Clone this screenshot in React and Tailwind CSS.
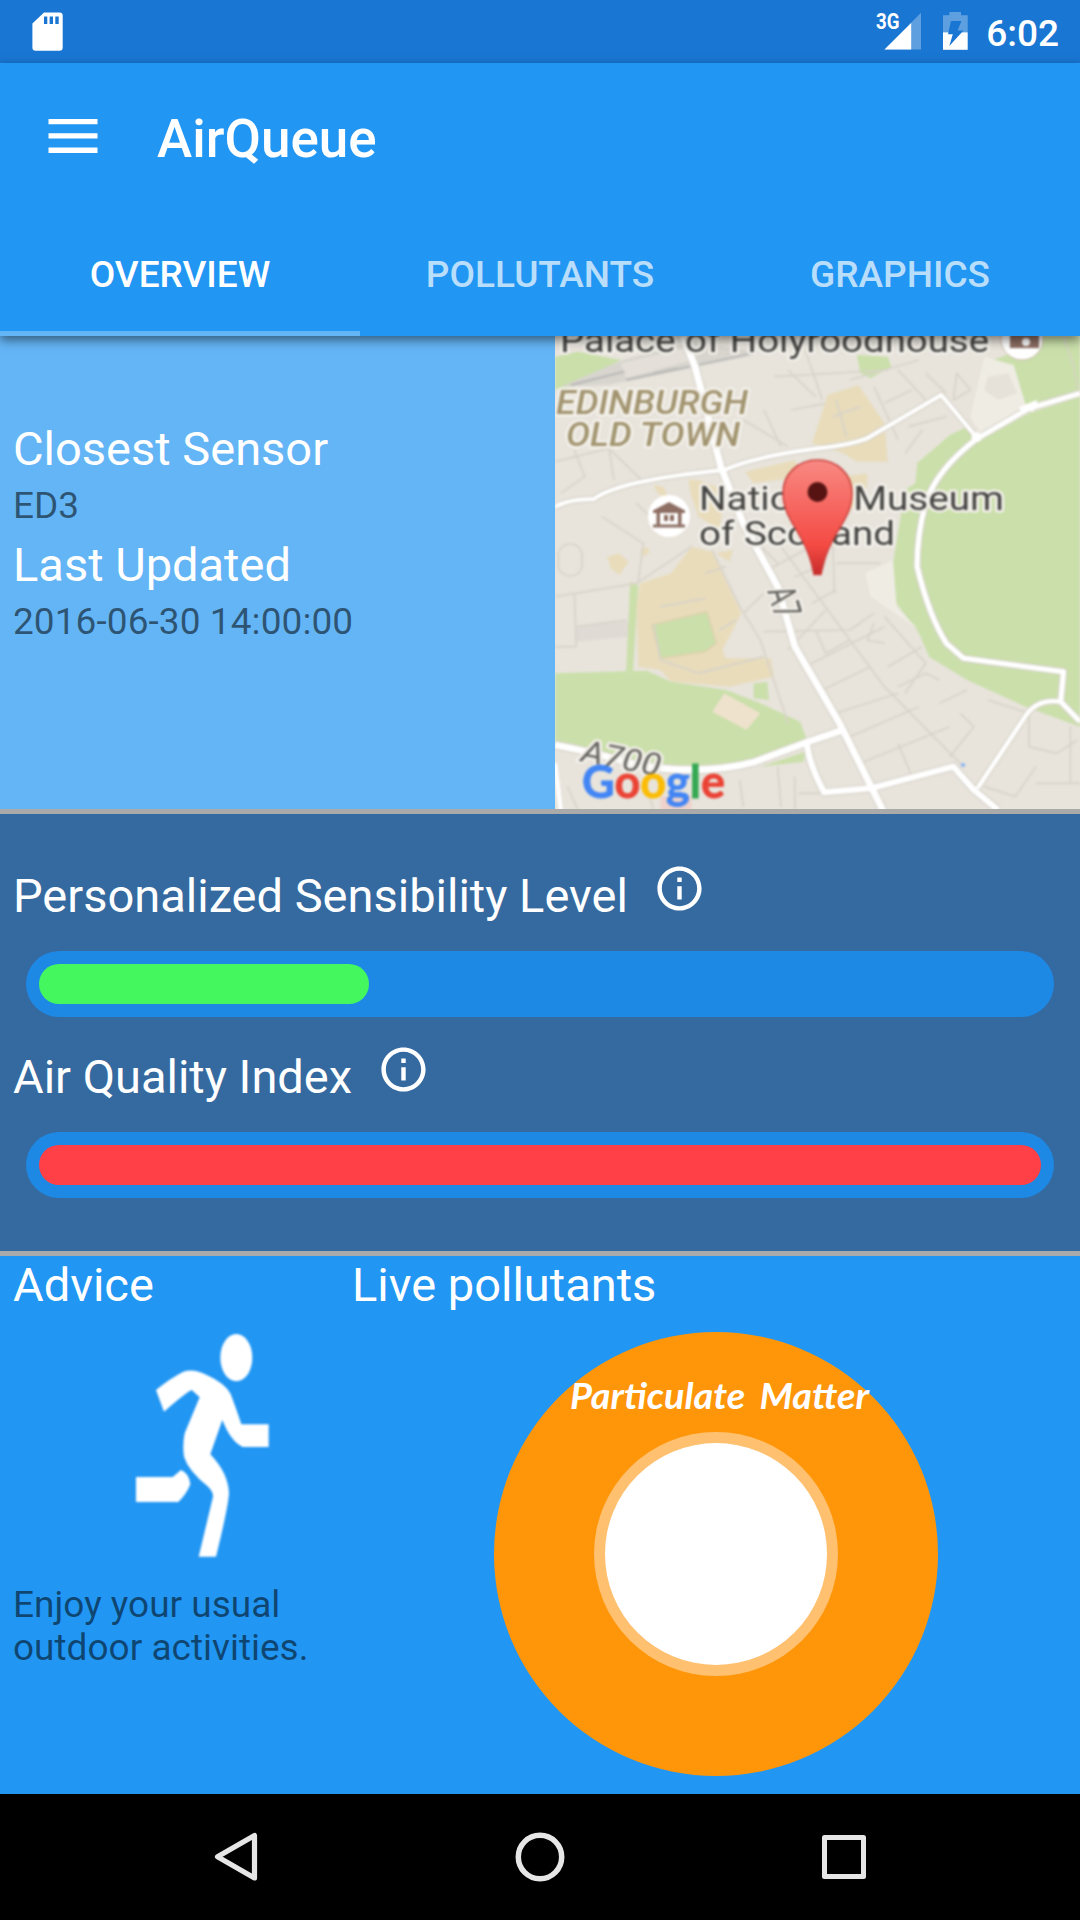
import React from "react";
import { MdInfoOutline } from "react-icons/md";

function StatusBar() {
  return (
    <div className="flex h-[63px] items-start justify-between bg-[#1976d2] pl-8 pr-[21px] text-white">
      <svg className="mt-3 h-[39px] w-[31px]" viewBox="0 0 31 39">
        <path
          fillRule="evenodd"
          fill="#fff"
          d="M12 0.5H27.5Q30.7 0.5 30.7 3.5V35.5Q30.7 38.7 27.5 38.7H3.5Q.4 38.7 .4 35.5V11.5ZM12 4.5V12H15.3V4.5ZM17.6 4.5V12H21V4.5ZM23.3 4.5V12H26.7V4.5Z"
        />
      </svg>
      <div className="flex items-start">
        <svg className="mt-2 h-[44px] w-[48px]" viewBox="0 0 48 44">
          <path d="M47 4.7V41.5H10.500Z" fill="#fff" opacity=".3" />
          <path d="M37.2 15V41.5H10.500Z" fill="#fff" />
          <text x="2" y="21" fontFamily="Roboto" fontWeight="700" fontSize="22" textLength="23.5" lengthAdjust="spacingAndGlyphs" fill="#fff">
            3G
          </text>
        </svg>
        <svg className="ml-[21px] mt-3 h-[38px] w-[25px]" viewBox="0 0 25 38">
          <path d="M0 3.2H6.3V0H18V3.2H24.7V20.3H0Z" fill="#fff" opacity=".3" />
          <path d="M0 20.3H24.7V37.8H0Z" fill="#fff" />
          <path d="M8 9H18.5L14.5 18.5H20.5L6.3 34L9.8 22.2H5Z" fill="#1976d2" />
        </svg>
        <span className="ml-[18px] mt-[7px] text-[37px] font-medium leading-[53px]">6:02</span>
      </div>
    </div>
  );
}

function AppBar() {
  return (
    <header className="relative z-10 h-[273px] bg-[#2196f3] text-white shadow-[0_4px_10px_rgba(0,0,0,0.5)]">
      <div className="flex h-[147px] items-center pl-12">
        <svg className="-mt-[2px] h-[36px] w-[50px]" viewBox="0 0 50 36">
          <path d="M.5 .9h49v5.400h-49zM.5 15.200h49v5.400h-49zM.5 29.500h49v5.400h-49z" fill="#fff" />
        </svg>
        <h1 className="ml-[59px] mt-[5px] text-[53px] font-medium leading-[62px]">AirQueue</h1>
      </div>
      <nav className="grid h-[126px] grid-cols-3 grid-rows-[126px] text-center text-[37px] font-medium leading-[129px]">
        <div className="h-[126px] border-b-[5px] border-[#64b5f6]">OVERVIEW</div>
        <div className="text-white/70">POLLUTANTS</div>
        <div className="text-white/70">GRAPHICS</div>
      </nav>
    </header>
  );
}

const minorStreets = [
  "M44 395L200 355L300 455M100 360L130 440L60 490M200 355L215 450",
  "M280 520L370 610M180 560L300 640L285 760M44 800L280 760L440 650M100 790L105 950L44 950M105 890L250 870",
  "M55 690A35 35 0 1 0 120 690A35 35 0 1 0 55 690",
  "M500 660L580 830L640 930L720 1180M590 850L650 790M650 905L900 900L970 850",
  "M660 720L770 660M700 650L1000 1070L1220 1300M740 740L830 700M790 820L860 780M830 840L720 960M850 640L855 790",
  "M860 700L990 700M800 900L830 970L900 930M770 1010L1000 890M820 1080L960 1010M860 1150L1040 1090M900 1220L1100 1130",
  "M930 1300L1190 1190M920 1290L960 1370M1040 1240L1080 1340M1000 860L1120 1000L1060 1090M970 880L950 930L1000 940",
  "M1010 1010L1110 950M1040 1070L1120 1030L1160 1050M1160 1120L1240 1080M1220 1150L1260 1190L1190 1280",
  "M1300 1110L1420 1150L1420 1250L1500 1270L1560 1230M1290 1370L1380 1400L1440 1310M1440 1360H1568M1540 1190V1360",
  "M580 1350L590 1430M690 1310L700 1430M750 1390L830 1390M740 1340V1440M310 1370L330 1440M80 1370L110 1440",
  "M720 120L800 200M650 240L700 350M590 270L640 300L720 350M680 140L1010 120M770 60L820 210M730 240L830 220",
  "M900 150L1100 90M970 170L1040 330M1040 120L1120 210M1070 290L1180 260M1060 370L1110 300M1120 130L1180 190",
  "M1210 130L1250 180L1200 210ZM1000 220L1080 180M940 330L1000 290M860 210L890 320M850 260L930 230",
  "M350 830L480 805M330 880L350 990L460 1030L650 980M480 730L540 710M520 900L570 870M560 560L690 700",
];

const majorRoads = [
  ["M415 18L450 110L480 230L525 410L590 580L690 770L740 950L870 1180L1000 1450", 20],
  ["M44 530Q90 505 155 508Q230 450 535 420Q620 380 810 355Q900 345 950 325L1165 195L1270 325", 12],
  ["M1568 190L1420 235L1270 325Q1150 420 1120 520Q1095 610 1095 710Q1130 860 1180 940L1230 985L1520 1025L1512 1115L1568 1175", 15],
  ["M1512 1115Q1450 1105 1415 1150L1270 1375", 13],
  ["M44 1245Q170 1270 270 1302Q460 1340 620 1297L780 1235L880 1200", 20],
  ["M775 1240Q780 1300 825 1387L960 1375L1200 1310L1260 1380L1330 1440", 18],
];

function MapLabel({ x, y, width, size, fill = "#454442", children, ...rest }) {
  return (
    <text
      x={x}
      y={y}
      textLength={width}
      lengthAdjust="spacingAndGlyphs"
      fontFamily="Roboto"
      fontSize={size}
      fill={fill}
      stroke="#f3f0ea"
      strokeWidth="5"
      strokeLinejoin="round"
      paintOrder="stroke"
      {...rest}
    >
      {children}
    </text>
  );
}

function SensorMap() {
  return (
    <svg className="h-[473px] w-[525px] shrink-0 bg-[#e8e4dc]" viewBox="0 0 525 473">
      <defs>
        <linearGradient id="pin" x1="0" y1="0" x2="0" y2="1">
          <stop offset="0" stopColor="#f98983" />
          <stop offset=".75" stopColor="#f44a43" />
          <stop offset="1" stopColor="#c62b2b" />
        </linearGradient>
      </defs>
      <g className="blur-[0.8px]">
        <g transform="matrix(0.3444 0 0 0.33333 -15 -6)" strokeLinejoin="round">
          {/* parks */}
          <g fill="#cadfaa">
            <path d="M44 80L110 65L235 90L90 170L44 178Z" />
            <path d="M920 75L1010 80L1020 110L960 145L930 130Z" />
            <path d="M1315 90L1370 70L1440 18H1568V185L1410 225L1375 105L1330 105Z" />
            <path d="M1568 200L1420 250L1280 330L1240 290L1190 315L1095 400L1090 460L1060 480L1025 700L1035 820L1100 910L1130 980L1240 1050L1410 1130L1568 1190Z" />
            <path d="M262 755L285 765L270 1025H250Z" />
            <path d="M44 1030L310 1022L380 1055L540 1080L640 1120L755 1175L775 1230L620 1290Q420 1320 270 1290L44 1240Z" />
            <path d="M620 1060L660 1055L665 1110L620 1105Z" />
            <path d="M640 1310L770 1265L765 1295Z" />
          </g>
          <path d="M1290 80L1375 105L1410 225L1280 310L1250 260Z M945 730L1025 690L1035 830L1100 900L1030 850L960 800Z" fill="#efece4" />
          <path d="M1300 140L1360 130L1385 190L1330 210L1290 180Z" fill="#e6e2da" />
          {/* rail yard */}
          <path d="M60 170L240 90L440 35L640 65L400 120L200 165Z" fill="#d8d5cf" />
          <path d="M235 100L420 55L440 90L250 145Z" fill="#e4e0d9" />
          <path d="M90 165L245 125M250 150L620 70M330 130L400 115" stroke="#bdbcb9" strokeWidth="7" fill="none" />
          <path d="M105 890L255 870V920L105 935Z" fill="#dfdad3" />
          {/* campus blocks */}
          <g fill="#e8dcbb">
            <path d="M835 195L925 165L1000 280L1010 395H920L880 370L790 340Z" />
            <path d="M595 425L740 390L760 440L620 460Z M330 465L360 470L370 500L345 495Z M430 450L460 450L540 480L520 600L460 560L440 500Z M870 440L950 430V470L890 560Z" />
            <path d="M440 650L500 665L585 850L530 960L540 985L670 985L680 1040L550 1070L380 1055L350 1020L285 1010L280 830L290 760L380 730Z" />
            <path d="M195 680L230 670L258 695L230 735L205 715Z M290 660L310 650L320 665L300 680Z M510 670L560 660L550 695Z" />
          </g>
          <path d="M325 885L485 845L512 940L480 965L350 985Z" fill="#cadfaa" stroke="#ded3ae" strokeWidth="5" />
          <path d="M535 1090L640 1150L600 1200L500 1145Z" fill="#eee2cc" />
          <path d="M350 1400L440 1395L440 1440H350Z" fill="#eed2cb" />
          <g fill="none" stroke="#d8d3c9" strokeWidth="5">
            {minorStreets.map((d) => (
              <path key={d} d={d} />
            ))}
            <path d="M1520 18L1550 110L1562 180" strokeWidth="4" />
          </g>
          <g fill="none" stroke="#d6d2c8">
            {majorRoads.map(([d, w]) => (
              <path key={d} d={d} strokeWidth={w + 7} />
            ))}
          </g>
          <g fill="none" stroke="#fff">
            {majorRoads.map(([d, w]) => (
              <path key={d} d={d} strokeWidth={w} />
            ))}
            <path d="M44 1300L60 1440" strokeWidth="12" />
          </g>
          <circle cx="1268" cy="322" r="15" fill="#fff" />
          <path d="M1395 235L1440 215L1430 240Z" fill="#fff" stroke="#fff" strokeWidth="8" />
          <rect x="1222" y="1300" width="12" height="10" fill="#8ab4f0" />
        </g>

        <MapLabel x="5" y="16" width="429" size="34">Palace of Holyroodhouse</MapLabel>
        <circle cx="467" cy="3" r="21" fill="#fff" stroke="#cbb9aa" />
        <path d="M455 -4H484V12H455Z" fill="#8d6e63" />
        <circle cx="471" cy="6" r="4" fill="#fff" />

        <MapLabel x="1" y="78" width="192" size="33.5" fill="#a2946f" fontStyle="italic" fontWeight="500">EDINBURGH</MapLabel>
        <MapLabel x="11" y="110" width="174" size="33.5" fill="#a2946f" fontStyle="italic" fontWeight="500">OLD TOWN</MapLabel>

        <circle cx="114" cy="180" r="21" fill="#fff" />
        <g fill="#8d6e63">
          <path d="M114 166L130 174.500V177H98V174.500Z" />
          <path d="M98 188.500H130V191.500H98Z M101.500 177H105V189H101.500Z M123 177H126.500V189H123Z" />
          <path d="M109 179H113V185H109Z M115 179H119V185H115Z" />
        </g>
        <MapLabel x="144" y="174" width="305" size="34">National Museum</MapLabel>
        <MapLabel x="144" y="209" width="196" size="34">of Scotland</MapLabel>

        <MapLabel x="0" y="0" width="31" size="39" fill="#66645f" transform="translate(212 255) rotate(73)">A7</MapLabel>
        <MapLabel x="0" y="0" width="80" size="31" fill="#66645f" transform="translate(25 425) rotate(11)" fontStyle="italic">A700</MapLabel>

        <path
          d="M262.500 124C243 124 228 138 228 157C228 177 239 188 248 206C256 221 257 230 259 238.500H266C268 230 269 221 277 206C286 188 297 177 297 157C297 138 282 124 262.500 124Z"
          fill="url(#pin)"
          stroke="#c9403c"
          strokeWidth="1.5"
        />
        <circle cx="262.500" cy="156" r="10" fill="#561312" />

        <text
          x="27"
          y="462"
          fontFamily="Lato"
          fontWeight="700"
          fontSize="46"
          textLength="143"
          lengthAdjust="spacingAndGlyphs"
          strokeWidth="0.8"
        >
          <tspan fill="#4285f4" stroke="#4285f4">G</tspan>
          <tspan fill="#ea4335" stroke="#ea4335">o</tspan>
          <tspan fill="#fbbc05" stroke="#fbbc05">o</tspan>
          <tspan fill="#4285f4" stroke="#4285f4">g</tspan>
          <tspan fill="#34a853" stroke="#34a853">l</tspan>
          <tspan fill="#ea4335" stroke="#ea4335">e</tspan>
        </text>
      </g>
    </svg>
  );
}

function SensorRow() {
  return (
    <section className="flex h-[478px] border-b-[5px] border-[#aaaaaa] bg-[#64b5f6]">
      <div className="w-[555px] shrink-0 pl-[13px] pt-[81px] text-[37px] leading-[54px] text-black/54">
        <h2 className="text-[47px] leading-[63px] text-white">Closest Sensor</h2>
        <p className="-mt-px">ED3</p>
        <h2 className="text-[47px] leading-[63px] text-white">Last Updated</h2>
        <p className="-mt-px tracking-[0.08px]">2016-06-30 14:00:00</p>
      </div>
      <SensorMap />
    </section>
  );
}

function Meter({ label, percent, barClass }) {
  return (
    <div className="h-[181px]">
      <div className="flex h-[86px] pl-[13px]">
        <h2 className="text-[47px] leading-[62px] text-white">{label}</h2>
        <MdInfoOutline className="-mt-[3px] ml-[25px] size-[53px] text-white blur-[0.5px]" />
      </div>
      <div className="mx-[26px] h-[66px] rounded-full bg-[#1e88e5] p-[13px]">
        <div className={barClass} style={{ width: `${percent}%` }} />
      </div>
    </div>
  );
}

function Levels() {
  return (
    <section className="h-[442px] border-b-[5px] border-[#aaaaaa] bg-[#356aa0] pt-[51px]">
      <Meter label="Personalized Sensibility Level" percent={32.95} barClass="h-10 rounded-full bg-[#44f75e]" />
      <Meter label="Air Quality Index" percent={100} barClass="h-10 rounded-full bg-[#ff4147]" />
    </section>
  );
}

function Runner() {
  return (
    <svg className="ml-[120px] h-[270px] w-[200px] blur-[1.3px]" viewBox="0 0 600 810" fill="#fff">
      <ellipse cx="349" cy="143" rx="48" ry="71" />
      <path d="M108 240Q150 205 190 185Q222 174 262 196Q315 220 332 252Q352 305 364 343H446V411H368Q332 394 307 330L271 433Q325 490 327 550Q325 590 288 740H236L279 560Q280 545 262 528Q205 482 192 440Q187 405 194 370L239 262L215 240Q195 250 132 305Z" />
      <path d="M48 501H158L183 480Q208 490 211 523Q200 552 175 576H48Z" />
    </svg>
  );
}

function Bottom() {
  return (
    <section className="flex h-[538px] bg-[#2196f3]">
      <div className="w-[352px] shrink-0">
        <h2 className="h-[54px] pl-[13px] text-[47px] leading-[57px] text-white">Advice</h2>
        <Runner />
        <p className="pl-[13px] pt-[3px] text-[37px] leading-[43px] text-black/54">
          Enjoy your usual
          <br />
          outdoor activities.
        </p>
      </div>
      <div className="grow">
        <h2 className="h-[76px] text-[47px] leading-[57px] text-white">Live pollutants</h2>
        <svg className="ml-[142px] h-[444px] w-[444px]" viewBox="0 0 444 444">
          <circle cx="222" cy="222" r="222" fill="#ff960a" />
          <circle cx="222" cy="222" r="122" fill="#ffc070" />
          <circle cx="222" cy="222" r="111" fill="#fff" />
          <text
            x="76"
            y="77"
            fill="#fff"
            fontFamily="'Ink Free', 'Segoe Print', Lato, cursive"
            fontStyle="italic"
            fontWeight="700"
            fontSize="37"
            wordSpacing="6"
            textLength="299"
            lengthAdjust="spacingAndGlyphs"
          >
            Particulate Matter
          </text>
        </svg>
      </div>
    </section>
  );
}

function NavBar() {
  return (
    <footer className="flex h-[126px] items-center justify-between bg-black pl-[211px] pr-[211px]">
      <svg className="size-[52px]" viewBox="0 0 52 52" fill="none" stroke="#e6e6e6" strokeWidth="5.2" strokeLinejoin="round">
        <path d="M43.500 4.500V47L6.500 25.800Z" />
      </svg>
      <svg className="size-[52px]" viewBox="0 0 52 52" fill="none" stroke="#e6e6e6" strokeWidth="5.500">
        <circle cx="26" cy="26" r="21.700" />
      </svg>
      <svg className="size-[52px]" viewBox="0 0 52 52" fill="none" stroke="#e6e6e6" strokeWidth="5" strokeLinejoin="round">
        <path d="M7.500 6.500H46.500V45.500H7.500Z" />
      </svg>
    </footer>
  );
}

export default function App() {
  return (
    <main className="h-[1920px] w-[1080px] overflow-hidden bg-[#2196f3] font-['Roboto',sans-serif]">
      <StatusBar />
      <AppBar />
      <SensorRow />
      <Levels />
      <Bottom />
      <NavBar />
    </main>
  );
}
